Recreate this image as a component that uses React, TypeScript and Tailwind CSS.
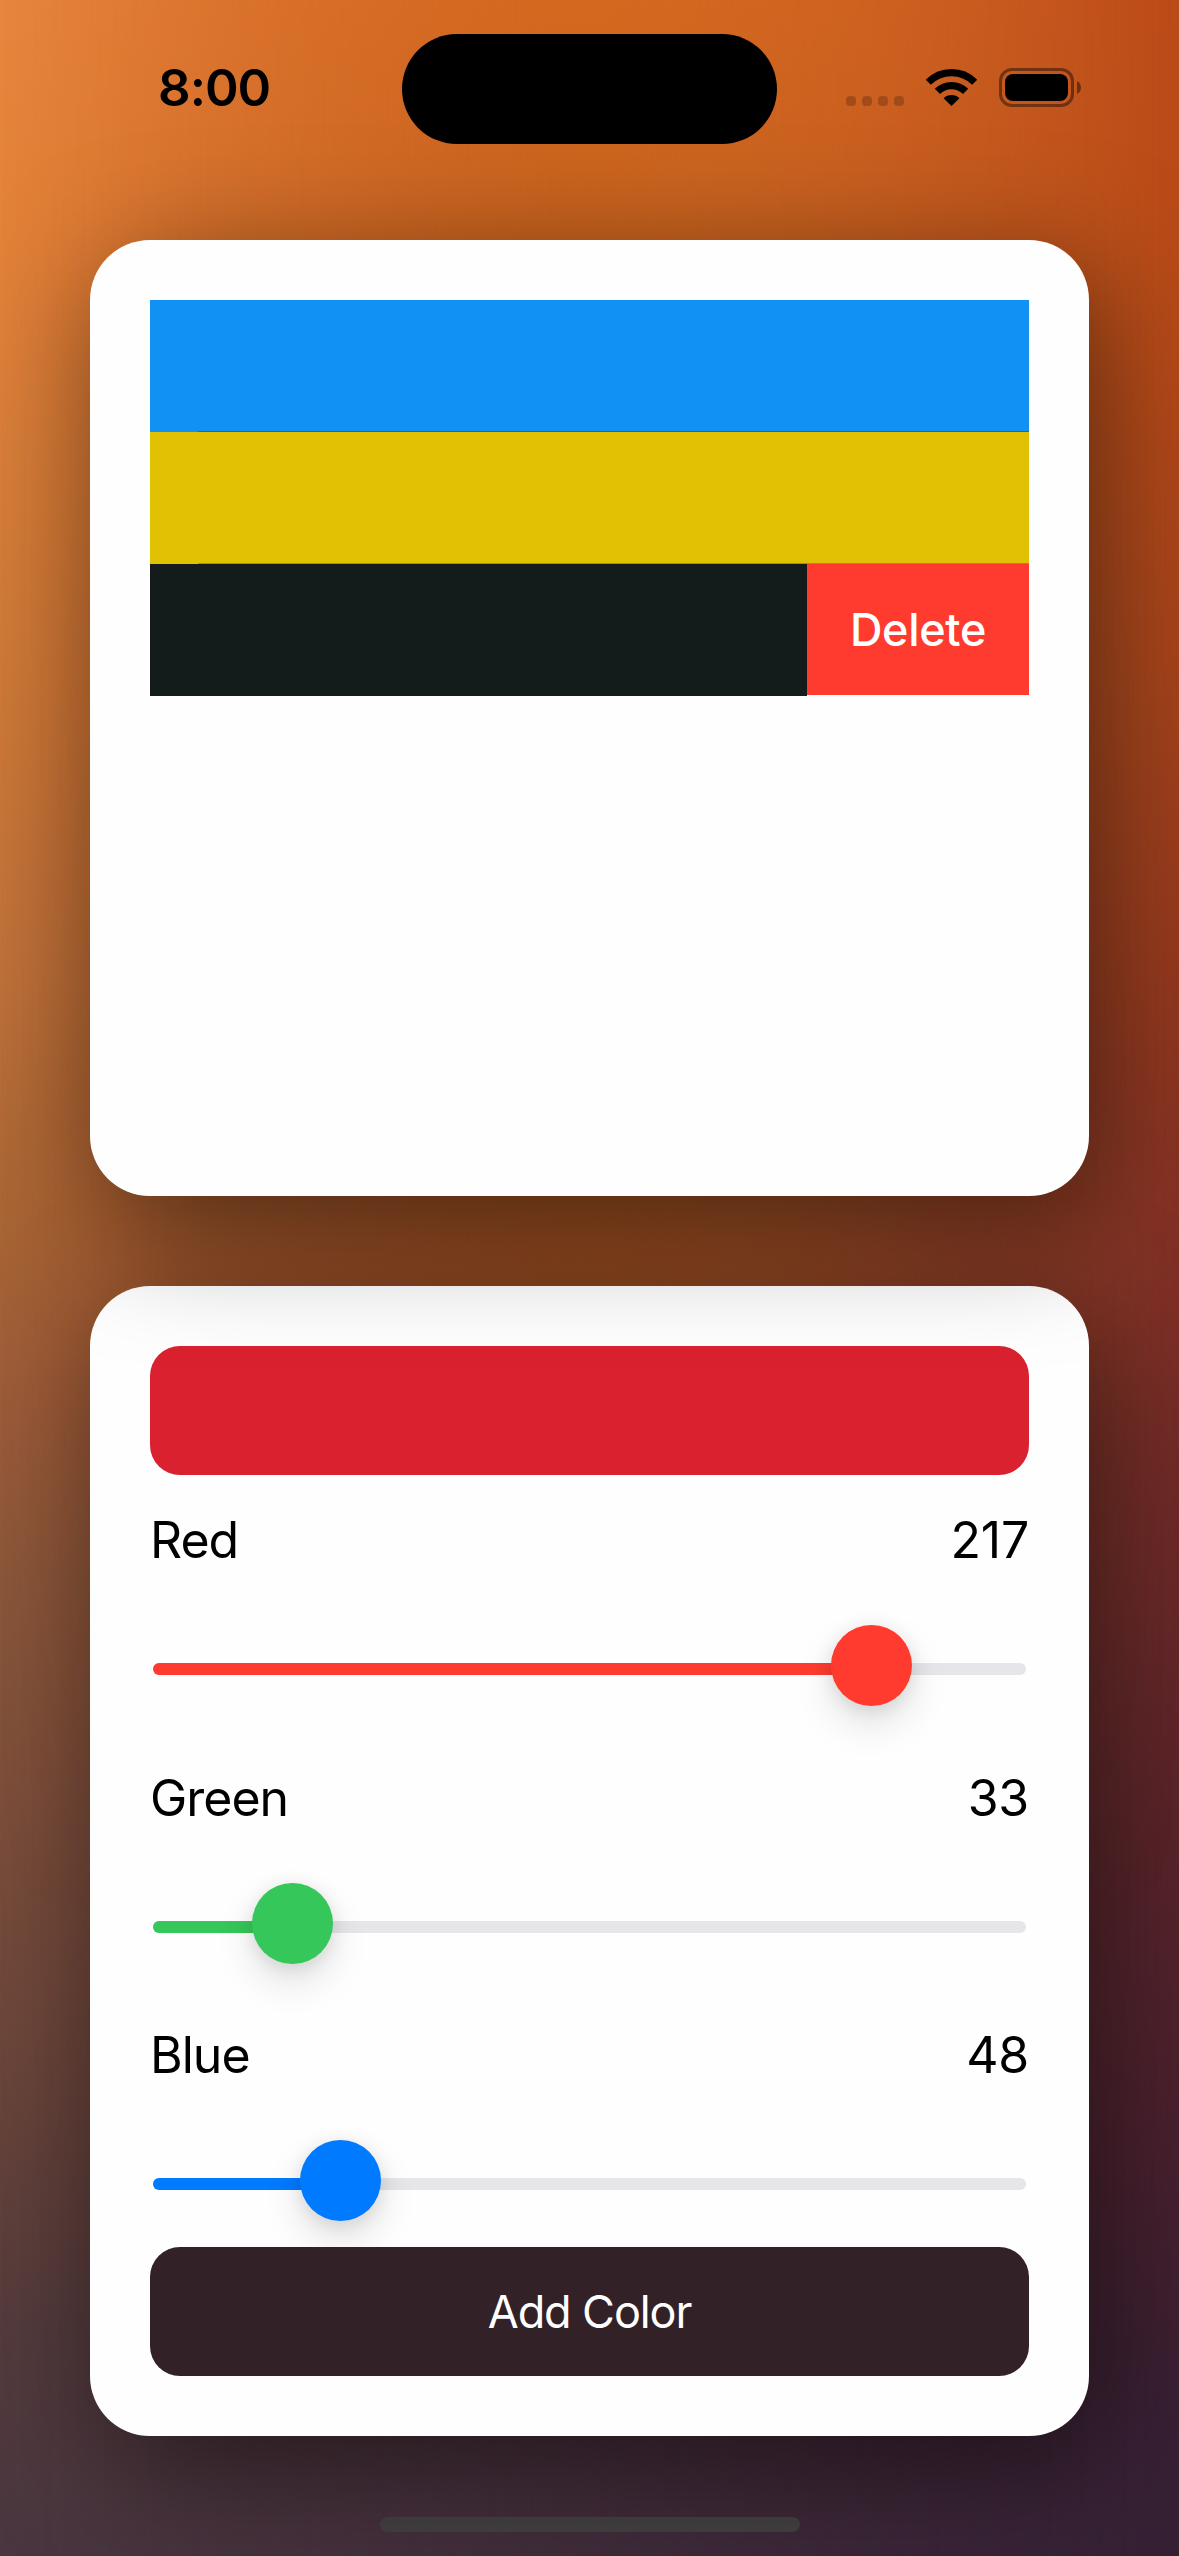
type Channel = {
  label: string
  value: number
  bar: string
}

const channels: Channel[] = [
  { label: 'Red', value: 217, bar: 'bg-[#ff3b30]' },
  { label: 'Green', value: 33, bar: 'bg-[#35c759]' },
  { label: 'Blue', value: 48.3, bar: 'bg-[#007aff]' },
]

const savedColors = ['bg-[#1191f4]', 'bg-[#e0c104]']

function WifiIcon() {
  return (
    <svg width="51" height="37" viewBox="0 0 51 37" fill="none" className="ml-[22px]">
      <path d="M2.3 13.3A32.8 32.8 0 0 1 48.7 13.3" stroke="black" strokeWidth="7.2" />
      <path d="M11.4 22.4A20 20 0 0 1 39.6 22.4" stroke="black" strokeWidth="7.4" />
      <path d="M25.5 37L17.6 29.2A11.4 11.4 0 0 1 33.4 29.2Z" fill="black" />
    </svg>
  )
}

function BatteryIcon() {
  return (
    <svg width="82" height="39" viewBox="0 0 82 39" fill="none" className="ml-[22px]">
      <rect x="1.5" y="1.5" width="72" height="36" rx="11.5" stroke="black" strokeOpacity="0.42" strokeWidth="3" />
      <rect x="6" y="6" width="63" height="27" rx="8" fill="black" />
      <path d="M78 13C80.700 14.500 82 17 82 19.500S80.700 24.500 78 26Z" fill="black" fillOpacity="0.45" />
    </svg>
  )
}

function StatusBar() {
  return (
    <header className="flex h-[240px] items-start">
      <div className="w-[402px] pt-[57px] pl-[158px] text-[51px] leading-[62px] font-semibold tracking-[-1px]">8:00</div>
      <div className="mt-[34px] h-[110px] w-[375px] rounded-full bg-black" />
      <div className="mt-[68px] ml-[69px] flex h-[39px] items-center">
        <div className="flex gap-[6px] self-end pb-px">
          {[0, 1, 2, 3].map((dot) => (
            <span key={dot} className="size-[10px] rounded-[4px] bg-black/20" />
          ))}
        </div>
        <WifiIcon />
        <BatteryIcon />
      </div>
    </header>
  )
}

function SavedColors() {
  return (
    <section className="relative z-10 h-[956px] rounded-[60px] bg-[#fefefe] p-[60px] shadow-[15px_30px_120px_rgba(0,0,0,0.5)]">
      {savedColors.map((color) => (
        <div key={color} className={`flex h-[132px] items-end justify-end ${color}`}>
          <div className="h-px w-[831px] bg-black/25" />
        </div>
      ))}
      <div className="flex h-[132px]">
        <div className="flex-1 bg-[#131c1a]" />
        <button className="flex h-[131px] w-[222px] items-center justify-center bg-[#ff3b30] text-[45px] font-medium tracking-[-0.3px] text-white">
          Delete
        </button>
      </div>
    </section>
  )
}

function ColorSlider({ label, value, bar }: Channel) {
  const offset = -2 + (value / 255) * 802.5
  return (
    <div className="pt-[35px]">
      <div className="flex justify-between text-[50px] leading-[60px]">
        <span className="tracking-[-1px]">{label}</span>
        <span className="tracking-[-0.2px]">{Math.floor(value)}</span>
      </div>
      <div className="relative mt-[55px] flex h-[81px] items-center pt-[7px]">
        <div className="mx-[3px] flex h-[12px] flex-1 overflow-hidden rounded-full bg-[#e5e5ea]">
          <div className={bar} style={{ width: offset + 38 }} />
        </div>
        <div
          className={`absolute top-0 size-[81px] rounded-full shadow-[0_18px_39px_rgba(0,0,0,0.12),0_3px_18px_rgba(0,0,0,0.1)] ${bar}`}
          style={{ left: offset }}
        />
      </div>
    </div>
  )
}

function ColorMixer() {
  return (
    <section className="flex h-[1150px] flex-col rounded-[60px] bg-[#fefefe] p-[60px] shadow-[15px_30px_120px_rgba(0,0,0,0.5)]">
      <div className="h-[129px] shrink-0 rounded-[30px] bg-[#da212f]" />
      <div className="grid grid-rows-[258px_257px_257px]">
        {channels.map((channel) => (
          <ColorSlider key={channel.label} {...channel} />
        ))}
      </div>
      <button className="relative h-[129px] shrink-0 rounded-[30px] bg-[#322127] text-[45px] tracking-[-1.1px] text-white">
        Add Color
      </button>
    </section>
  )
}

export default function App() {
  return (
    <div className="relative h-[2556px] w-[1179px] overflow-hidden bg-[linear-gradient(to_bottom,#e8863f_0%,#e4833a_9%,#d97f3a_18%,#cf7a39_27%,#c0733b_38%,#aa6636_48%,#9d5d3b_55%,#8c583b_62%,#7e503c_70%,#6d473b_80%,#553c3d_91%,#4a3740_100%)] font-[Inter,sans-serif] text-black">
      <div className="absolute inset-0 bg-[linear-gradient(to_bottom,#bb4a18_0%,#b84a19_14%,#a7441c_27%,#97391f_38%,#813027_50%,#6f2a29_60%,#5d252b_70%,#48202f_85%,#3a2034_94%,#352035_100%)] [mask-image:linear-gradient(to_right,transparent,black)]" />
      <div className="absolute inset-0 bg-[linear-gradient(to_bottom,#d4681e,#964c20_50%,#964c2000_75%)] [mask-image:linear-gradient(to_right,transparent,black_50%,transparent)]" />
      <div className="relative">
        <StatusBar />
        <main className="flex flex-col gap-[90px] px-[90px]">
          <SavedColors />
          <ColorMixer />
        </main>
        <div className="mx-auto mt-[81px] h-[15px] w-[420px] rounded-full bg-[#444042]" />
      </div>
    </div>
  )
}
